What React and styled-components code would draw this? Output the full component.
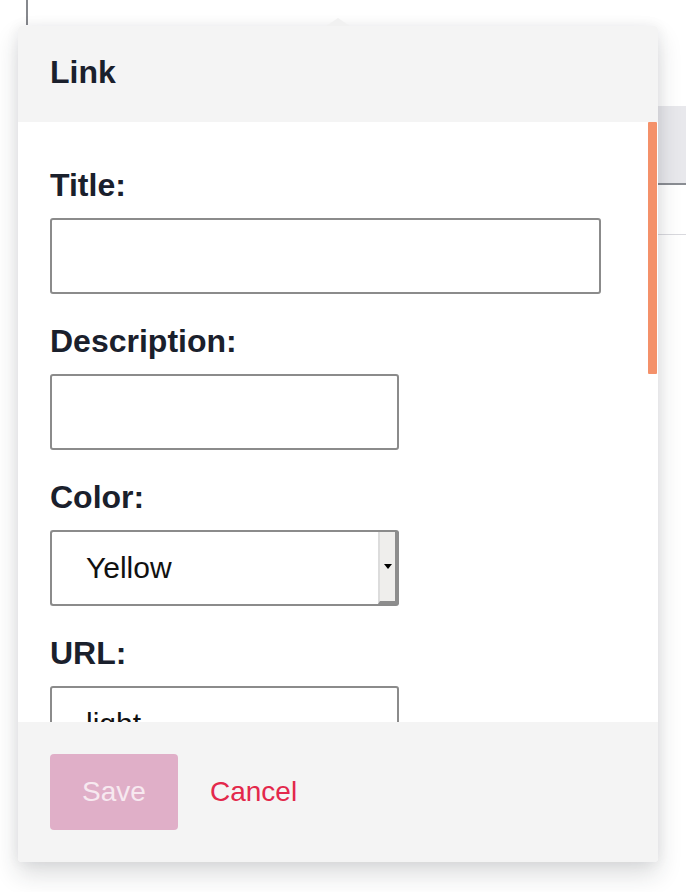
import React from 'react';
import styled, { createGlobalStyle } from 'styled-components';

const ink = '#1a202c';
const panel = '#f4f4f4';
const fieldBorder = '#8b8b8b';

const Global = createGlobalStyle`
  html, body {
    margin: 0;
    padding: 0;
    background: #ffffff;
    font-family: "Liberation Sans", Arial, sans-serif;
  }
  #root {
    width: 686px;
    height: 892px;
    overflow: hidden;
  }
`;

const Page = styled.div`
  position: relative;
  width: 686px;
  height: 892px;
`;

// what sits behind the popover (editor toolbar etc)
const Backdrop = styled.div`
  display: flex;
  flex-direction: column;
`;

const ToolRule = styled.div`
  margin-left: 26px;
  width: 2px;
  height: 25px;
  background: #86888d;
`;

const Strip = styled.div`
  margin-top: 81px;
  margin-left: 300px;
  height: 77px;
  background: #e8e8ec;
  border-bottom: 2px solid #8a8d93;
`;

const Divider = styled.div`
  margin-top: 49px;
  margin-left: 300px;
  height: 1px;
  background: #d9d9de;
`;

const Popover = styled.div`
  position: absolute;
  top: 26px;
  left: 18px;
  width: 640px;
  border-radius: 4px;
  background: #fff;
  box-shadow: 0 12px 24px rgba(30, 35, 45, 0.16), 0 0 14px rgba(30, 35, 45, 0.06);

  &::before {
    content: '';
    position: absolute;
    top: -8px;
    left: 308px;
    border-left: 12px solid transparent;
    border-right: 12px solid transparent;
    border-bottom: 8px solid #f1f1f1;
  }
`;

const Header = styled.div`
  height: 96px;
  box-sizing: border-box;
  display: flex;
  align-items: center;
  padding: 0 32px 4px;
  background: ${panel};
  border-radius: 4px 4px 0 0;
  font-size: 32px;
  font-weight: 700;
  color: ${ink};
`;

const Body = styled.div`
  position: relative;
  height: 600px;
  overflow: hidden;
  padding: 44px 32px 0;
  box-sizing: border-box;
`;

const ScrollThumb = styled.div`
  position: absolute;
  top: 0;
  right: 1px;
  width: 9px;
  height: 252px;
  background: #f4916a;
  border-radius: 1px;
`;

const Field = styled.div`
  display: flex;
  flex-direction: column;
  gap: 14px;
  margin-bottom: 28px;
`;

const Label = styled.label`
  font-size: 32px;
  line-height: 38px;
  font-weight: 700;
  color: ${ink};
`;

const Input = styled.input`
  box-sizing: border-box;
  width: ${p => (p.$wide ? '551px' : '349px')};
  height: 76px;
  padding: 0 34px;
  border: 2px solid ${fieldBorder};
  border-radius: 3px;
  font-family: "Liberation Sans", Arial, sans-serif;
  font-size: 30px;
  color: #111;
  background: #fff;
  outline: none;
`;

const Select = styled.div`
  box-sizing: border-box;
  width: 349px;
  height: 76px;
  display: flex;
  align-items: stretch;
  border: 2px solid ${fieldBorder};
  border-right: none;
  border-radius: 3px;
  background: #fff;
`;

const SelectValue = styled.div`
  flex: 1;
  display: flex;
  align-items: center;
  padding-left: 34px;
  font-size: 30px;
  color: #111;
`;

const SelectButton = styled.div`
  box-sizing: border-box;
  width: 21px;
  display: flex;
  align-items: center;
  justify-content: center;
  background: #efeeec;
  border-left: 2px solid #dcdcdc;
  border-right: 4px solid #8d8d8d;
  border-bottom: 3px solid #8d8d8d;

  &::after {
    content: '';
    border-left: 4px solid transparent;
    border-right: 4px solid transparent;
    border-top: 5px solid #000;
    margin-left: 1px;
  }
`;

const Footer = styled.div`
  height: 140px;
  box-sizing: border-box;
  padding: 32px 32px 0;
  display: flex;
  align-items: flex-start;
  gap: 32px;
  background: ${panel};
  border-radius: 0 0 4px 4px;
`;

const SaveButton = styled.button`
  width: 128px;
  height: 76px;
  border: none;
  border-radius: 4px;
  background: #e0afc8;
  color: #f7e9f0;
  font-family: "Liberation Sans", Arial, sans-serif;
  font-size: 28px;
`;

const CancelButton = styled.button`
  height: 76px;
  padding: 0;
  border: none;
  background: none;
  color: #e3284b;
  font-family: "Liberation Sans", Arial, sans-serif;
  font-size: 28px;
`;

export default function App() {
  return (
    <Page>
      <Global />
      <Backdrop>
        <ToolRule />
        <Strip />
        <Divider />
      </Backdrop>

      <Popover>
        <Header>Link</Header>
        <Body>
          <Field>
            <Label>Title:</Label>
            <Input $wide defaultValue="" />
          </Field>
          <Field>
            <Label>Description:</Label>
            <Input defaultValue="" />
          </Field>
          <Field>
            <Label>Color:</Label>
            <Select>
              <SelectValue>Yellow</SelectValue>
              <SelectButton />
            </Select>
          </Field>
          <Field>
            <Label>URL:</Label>
            <Input defaultValue="light" />
          </Field>
          <ScrollThumb />
        </Body>
        <Footer>
          <SaveButton disabled>Save</SaveButton>
          <CancelButton>Cancel</CancelButton>
        </Footer>
      </Popover>
    </Page>
  );
}
